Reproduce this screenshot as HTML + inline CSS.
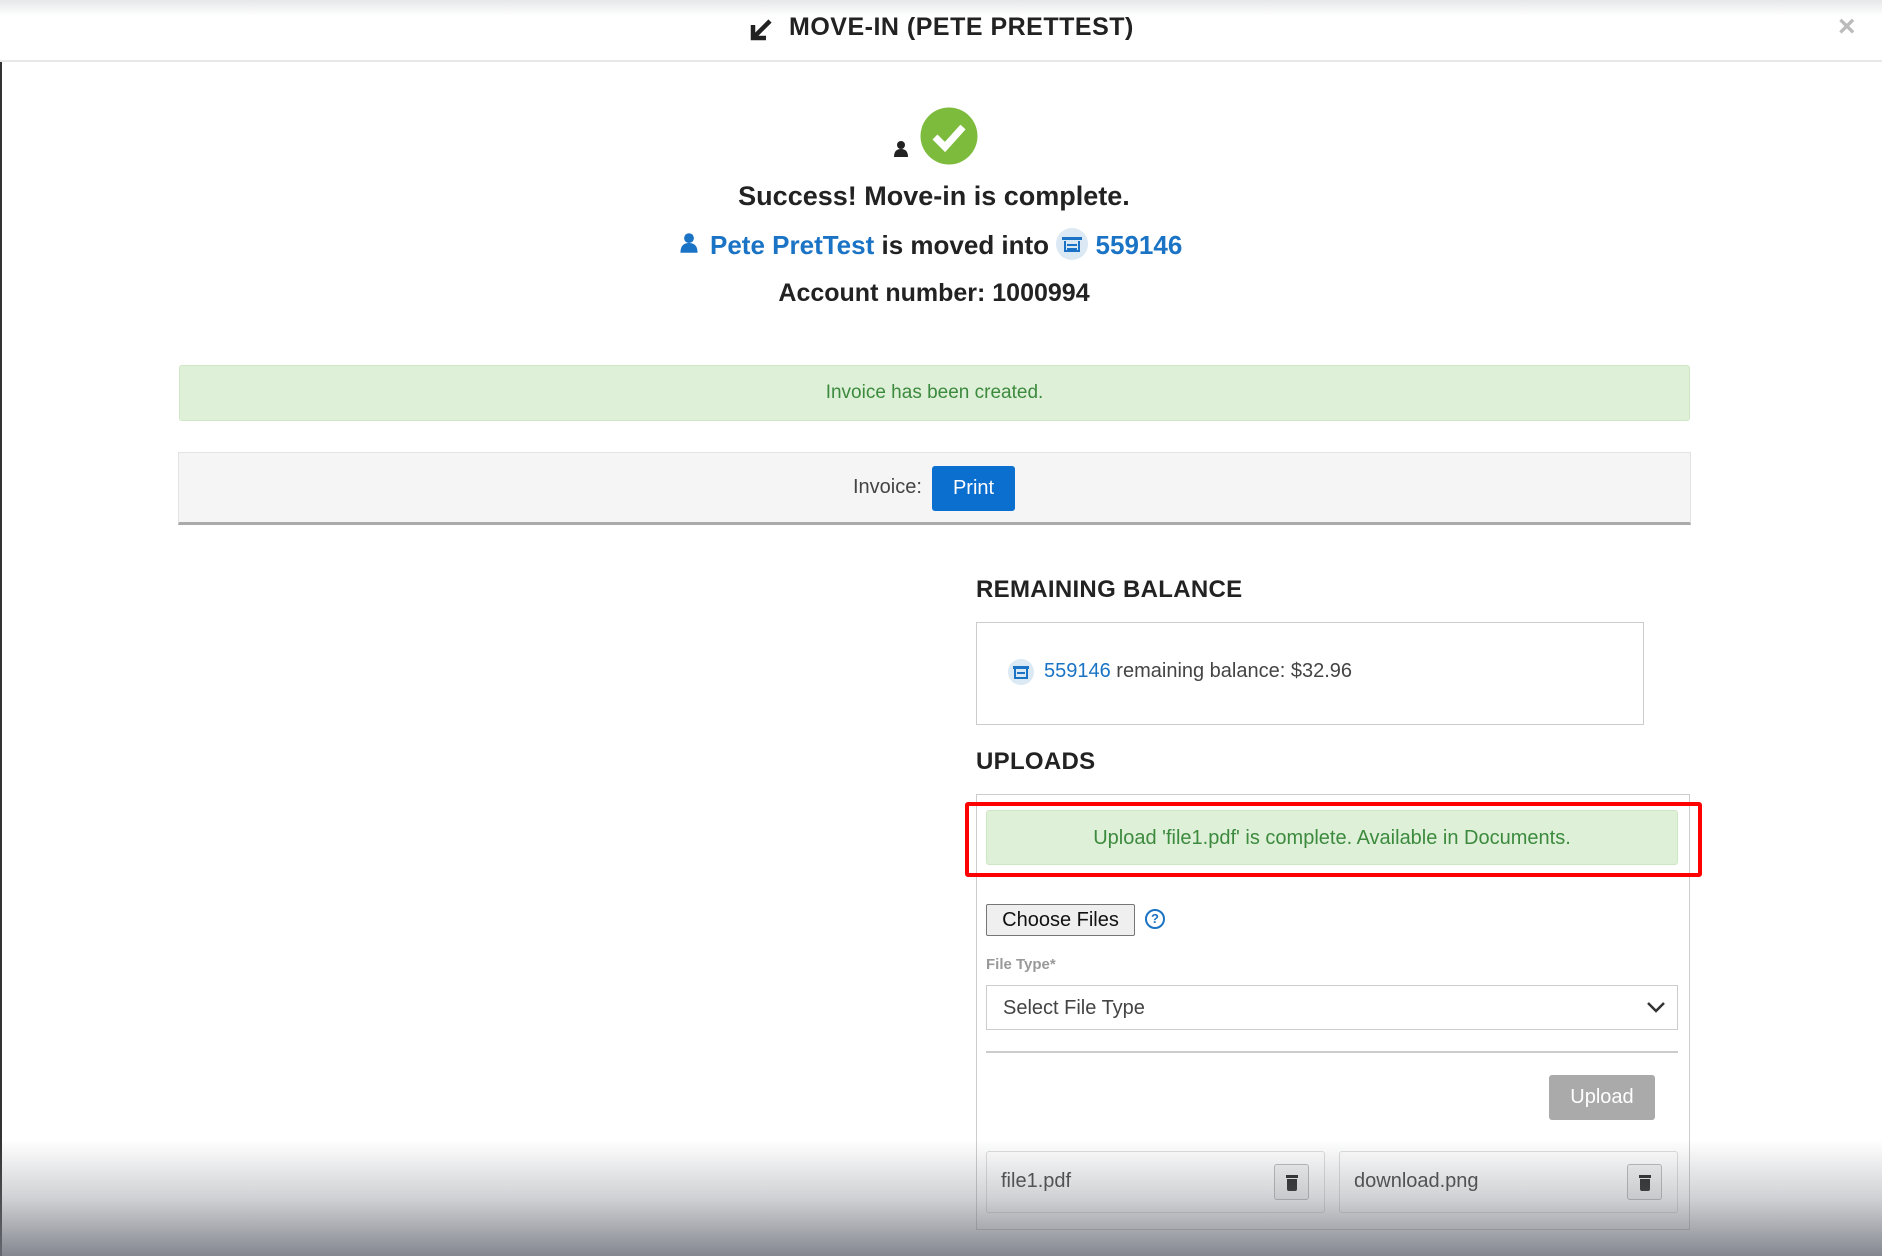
<!DOCTYPE html>
<html><head><style>
*{box-sizing:border-box;margin:0;padding:0}
body{width:1882px;height:1256px;background:#fff;position:relative;overflow:hidden;font-family:"Liberation Sans",sans-serif;color:#333}
.a{position:absolute}
.hd{left:0;top:0;width:1882px;height:62px;border-bottom:2px solid #e8e8e8;background:linear-gradient(#e6e7e9,#fff 16px)}
.c{text-align:center}
.grn{background:#dff0d8;border:1px solid #cfe6c4;color:#3c8a3e;border-radius:3px;text-align:center}
.blue{color:#1a73c4}
.h2{font-weight:bold;font-size:24px;color:#222;letter-spacing:.3px}
</style></head><body>
<div class="a" style="left:0;top:0;width:2px;height:1256px;background:#333"></div>
<div class="a hd"></div>
<svg class="a" style="left:748px;top:17px" width="26" height="26" viewBox="0 0 26 26"><path d="M22 4 L6 20 M5 8 V21 H18" stroke="#222" stroke-width="4.5" fill="none"/></svg>
<div class="a" style="left:789px;top:13px;font-size:25px;font-weight:bold;color:#222;letter-spacing:.5px">MOVE-IN (PETE PRETTEST)</div>
<div class="a" style="left:1838px;top:10px;font-size:30px;color:#bbb;font-weight:bold">×</div>

<svg class="a" style="left:893px;top:140px" width="16" height="18" viewBox="0 0 16 18"><circle cx="8" cy="5" r="4" fill="#222"/><path d="M1 17 Q1 9 8 9 Q15 9 15 17Z" fill="#222"/></svg>
<svg class="a" style="left:920px;top:107px" width="58" height="58" viewBox="0 0 58 58"><circle cx="29" cy="29" r="28.5" fill="#7dbb3c"/><path d="M15 30 L25 40 L43 20" stroke="#fff" stroke-width="7" fill="none"/></svg>
<div class="a c" style="left:0;width:1868px;top:181px;font-size:27px;font-weight:bold;color:#222">Success! Move-in is complete.</div>
<svg class="a" style="left:679px;top:232px" width="20" height="22" viewBox="0 0 16 18"><circle cx="8" cy="5" r="4" fill="#1a73c4"/><path d="M1 17 Q1 9 8 9 Q15 9 15 17Z" fill="#1a73c4"/></svg>
<div class="a" style="left:710px;top:228px;font-size:26px;font-weight:bold;color:#222;white-space:nowrap"><span class="blue">Pete PretTest</span> is moved into <span style="display:inline-block;width:32px;height:32px;border-radius:50%;background:#dbe9f5;vertical-align:-6px;position:relative"><span style="position:absolute;left:6px;top:9px;width:20px;height:3px;background:#1a73c4"></span><span style="position:absolute;left:8px;top:13px;width:16px;height:11px;border:2px solid #1a73c4;border-top:none"></span><span style="position:absolute;left:11px;top:16px;width:10px;height:2px;background:#1a73c4"></span><span style="position:absolute;left:11px;top:20px;width:10px;height:2px;background:#1a73c4"></span></span> <span class="blue">559146</span></div>
<div class="a c" style="left:0;width:1868px;top:279px;font-size:25px;font-weight:bold;color:#222">Account number: 1000994</div>

<div class="a grn" style="left:179px;top:365px;width:1511px;height:56px;line-height:54px;font-size:19px">Invoice has been created.</div>
<div class="a" style="left:178px;top:452px;width:1513px;height:73px;background:#f5f5f5;border:1px solid #e3e3e3;border-bottom:3px solid #aaa"></div>
<div class="a" style="left:853px;top:476px;font-size:20px;color:#444">Invoice:</div>
<div class="a" style="left:932px;top:466px;width:83px;height:45px;background:#0b6fd0;border-radius:3px;color:#fff;font-size:20px;text-align:center;line-height:45px">Print</div>

<div class="a h2" style="left:976px;top:576px">REMAINING BALANCE</div>
<div class="a" style="left:976px;top:622px;width:668px;height:103px;border:1px solid #ccc"></div>
<span class="a" style="left:1008px;top:659px;width:26px;height:26px;border-radius:50%;background:#dbe9f5"><span style="position:absolute;left:5px;top:7px;width:16px;height:3px;background:#1a73c4"></span><span style="position:absolute;left:6px;top:10px;width:14px;height:10px;border:2px solid #1a73c4;border-top:none"></span><span style="position:absolute;left:9px;top:13px;width:8px;height:2px;background:#1a73c4"></span></span>
<div class="a" style="left:1044px;top:660px;font-size:20px;color:#444"><span class="blue">559146</span> remaining balance: $32.96</div>

<div class="a h2" style="left:976px;top:748px">UPLOADS</div>
<div class="a" style="left:976px;top:794px;width:714px;height:436px;border:1px solid #ccc"></div>
<div class="a grn" style="left:986px;top:810px;width:692px;height:55px;line-height:54px;font-size:20px">Upload 'file1.pdf' is complete. Available in Documents.</div>
<div class="a" style="left:965px;top:802px;width:737px;height:75px;border:4px solid #f00;border-radius:3px"></div>
<div class="a" style="left:986px;top:904px;width:149px;height:32px;background:#efefef;border:1px solid #767676;border-radius:2px;font-size:20px;text-align:center;line-height:30px;color:#111">Choose Files</div>
<div class="a" style="left:1145px;top:909px;width:20px;height:20px;border:2px solid #1a73c4;border-radius:50%;color:#1a73c4;font-size:13px;font-weight:bold;text-align:center;line-height:16px">?</div>
<div class="a" style="left:986px;top:956px;font-size:15px;color:#999;font-weight:bold">File Type*</div>
<div class="a" style="left:986px;top:985px;width:692px;height:45px;border:1px solid #ccc;font-size:20px;color:#444;padding:11px 0 0 16px">Select File Type</div>
<svg class="a" style="left:1646px;top:1000px" width="20" height="14" viewBox="0 0 20 14"><path d="M2 3 L10 11 L18 3" stroke="#333" stroke-width="2.5" fill="none"/></svg>
<div class="a" style="left:986px;top:1051px;width:692px;height:2px;background:#ccc"></div>
<div class="a" style="left:1549px;top:1075px;width:106px;height:45px;background:#aaa;border-radius:3px;color:#fff;font-size:20px;text-align:center;line-height:45px">Upload</div>
<div class="a" style="left:986px;top:1151px;width:339px;height:62px;border:1px solid #ddd;border-radius:3px;font-size:20px;color:#444;padding:18px 14px">file1.pdf</div>
<div class="a" style="left:1339px;top:1151px;width:339px;height:62px;border:1px solid #ddd;border-radius:3px;font-size:20px;color:#444;padding:18px 14px">download.png</div>
<div class="a" style="left:1274px;top:1164px;width:35px;height:36px;border:1px solid #bbb;border-radius:3px;background:#f4f4f4"><span style="position:absolute;left:11px;top:10px;width:12px;height:3px;background:#222"></span><span style="position:absolute;left:12px;top:14px;width:10px;height:12px;background:#222;border-radius:0 0 2px 2px"></span></div>
<div class="a" style="left:1627px;top:1164px;width:35px;height:36px;border:1px solid #bbb;border-radius:3px;background:#f4f4f4"><span style="position:absolute;left:11px;top:10px;width:12px;height:3px;background:#222"></span><span style="position:absolute;left:12px;top:14px;width:10px;height:12px;background:#222;border-radius:0 0 2px 2px"></span></div>

<div class="a" style="left:0;top:1140px;width:1882px;height:116px;background:linear-gradient(rgba(120,124,132,0),rgba(120,124,132,.35) 50%,rgba(110,114,124,.85))"></div>
</body></html>
